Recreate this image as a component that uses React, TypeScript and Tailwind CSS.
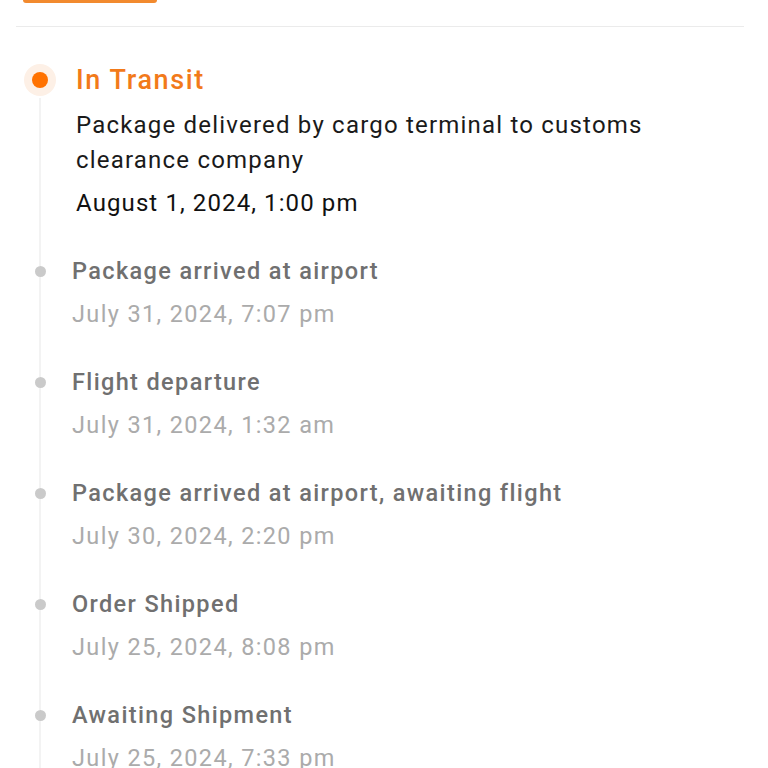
const events = [
  { title: 'Package arrived at airport', time: 'July 31, 2024, 7:07 pm' },
  { title: 'Flight departure', time: 'July 31, 2024, 1:32 am' },
  { title: 'Package arrived at airport, awaiting flight', time: 'July 30, 2024, 2:20 pm' },
  { title: 'Order Shipped', time: 'July 25, 2024, 8:08 pm' },
  { title: 'Awaiting Shipment', time: 'July 25, 2024, 7:33 pm' },
];

export default function App() {
  return (
    <div className="h-[768px] overflow-hidden bg-white font-['Roboto',sans-serif]">
      <div className="ml-[23px] h-[3px] w-[134px] rounded-b-sm bg-[#f28a2e]" />
      <div className="ml-4 mr-6 mt-[23px] h-px bg-[#ebebeb]" />

      <div className="pl-6 pt-[35px]">
        {/* current status */}
        <div className="flex">
          <div className="flex w-8 flex-col items-center">
            <div className="flex h-9 items-center">
              <div className="flex h-8 w-8 items-center justify-center rounded-full bg-[#fdf0e6]">
                <div className="h-4 w-4 rounded-full bg-[#ff7200]" />
              </div>
            </div>
            <div className="w-[2px] flex-1 bg-[#f3f3f3]" />
          </div>
          <div className="ml-5 pb-[38px]">
            <div className="text-[27px] font-medium leading-9 tracking-[0.06em] text-[#f27a1a]">In Transit</div>
            <div className="mt-[10px] text-[24px] leading-[35px] tracking-[0.05em] text-[#1a1a1a]">
              Package delivered by cargo terminal to customs
              <br />
              clearance company
            </div>
            <div className="mt-[10px] text-[24px] leading-[30px] tracking-[0.046em] text-[#111]">
              August 1, 2024, 1:00 pm
            </div>
          </div>
        </div>

        {events.map((e) => (
          <div key={e.time + e.title} className="flex">
            <div className="flex w-8 flex-col items-center">
              <div className="h-[10px] w-[2px] bg-[#f3f3f3]" />
              <div className="h-[11px] w-[11px] rounded-full bg-[#cacaca]" />
              <div className="w-[2px] flex-1 bg-[#f3f3f3]" />
            </div>
            <div className="ml-4 pb-[38px]">
              <div className="text-[23.5px] font-medium leading-[30px] tracking-[0.058em] text-[#707070]">
                {e.title}
              </div>
              <div className="mt-[13px] text-[23.5px] leading-[30px] tracking-[0.058em] text-[#ababab]">
                {e.time}
              </div>
            </div>
          </div>
        ))}
      </div>
    </div>
  );
}
